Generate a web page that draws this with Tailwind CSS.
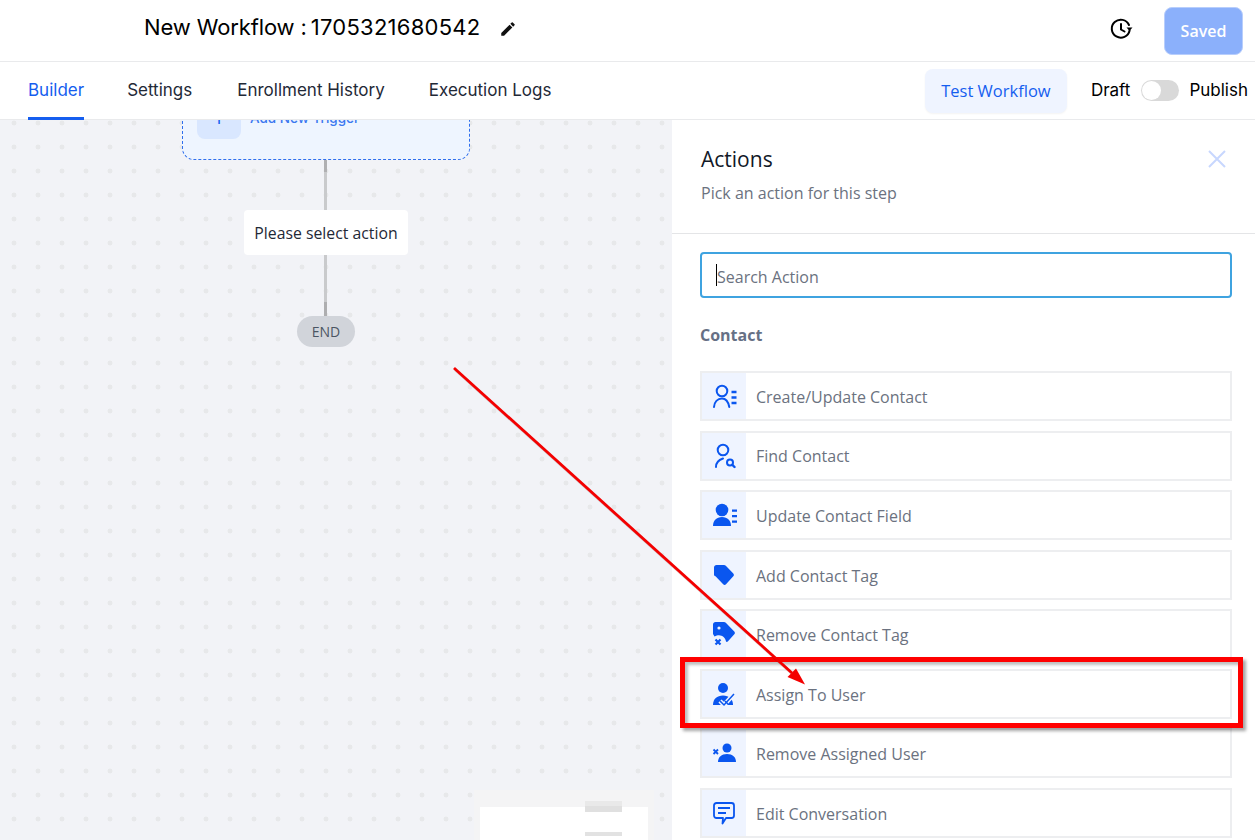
<!DOCTYPE html>
<html lang="en">
<head>
    <meta charset="UTF-8">
    <title>New Workflow</title>
    <script src="https://cdn.jsdelivr.net/npm/@tailwindcss/browser@4"></script>
</head>
<body class="bg-white w-[1255px] h-[840px] overflow-hidden relative font-['Inter',sans-serif]">

    <!-- Top bar -->
    <header class="h-[62px] border-b border-[#e9eaec] flex items-center pl-[144px] pr-[12px]">
        <h1 class="text-[22px] text-black leading-none -mt-[7px] flex"><span class="tracking-[-0.12px]">New Workflow :</span><span class="ml-[4px] tracking-[0.25px]">1705321680542</span></h1>
        <svg class="ml-[19px] -mt-[3px]" width="18" height="18" viewBox="0 0 24 24" fill="#111"><path d="M3 17.25V21h3.75L17.81 9.94l-3.75-3.75L3 17.25zM20.71 7.04a1 1 0 0 0 0-1.41l-2.34-2.34a1 1 0 0 0-1.41 0l-1.83 1.83 3.75 3.75 1.83-1.83z"/></svg>
        <svg class="ml-auto -mt-[4px]" width="24" height="24" viewBox="0 0 24 24" fill="none" stroke="#000" stroke-width="2"><path d="M20.6 13.500A9 9 0 1 1 20 8" stroke-linecap="round"/><path d="M12 7V12.500l3.500 2" stroke-linecap="round"/><path d="M17.500 10.500h6l-3 3.500z" fill="#000" stroke="none"/></svg>
        <button class="ml-[31px] w-[79px] h-[48px] rounded-lg bg-[#8bb0fb] border border-[#b8cefc] text-white font-semibold text-[16px] pt-[1px] font-['Open_Sans',sans-serif]">Saved</button>
    </header>

    <!-- Tabs -->
    <nav class="h-[58px] border-b border-[#e9eaec] flex items-stretch pl-[28px] pr-[7px] text-[17px] text-[#1f2937]">
        <a class="flex items-center border-b-[3px] border-[#155eef] text-[#155eef] pt-[2px] -mb-px">Builder</a>
        <a class="flex items-center ml-[43px]">Settings</a>
        <a class="flex items-center ml-[45px]">Enrollment History</a>
        <a class="flex items-center ml-[44px]">Execution Logs</a>
        <div class="ml-auto flex items-center text-black">
            <button class="w-[142px] h-[44px] rounded-lg bg-[#eff4ff] text-[#155eef] font-medium text-[16.500px] pt-[1px] font-['Open_Sans',sans-serif] shadow-[0_1px_2px_rgba(0,0,0,0.05)]">Test Workflow</button>
            <span class="ml-[24px]">Draft</span>
            <span class="ml-[11px] w-[38px] h-[21px] rounded-full bg-[#d9d9d9] relative"><span class="absolute left-[1px] top-[1px] w-[19px] h-[19px] rounded-full bg-white"></span></span>
            <span class="ml-[10px]">Publish</span>
        </div>
    </nav>

    <main class="flex h-[720px]">
        <!-- Canvas -->
        <section class="relative w-[672px] overflow-hidden bg-[#f2f3f7] bg-[radial-gradient(circle,#e7e8ea_2.2px,transparent_2.700px)] bg-[size:24px_24px] bg-[position:2px_-9px] font-['Open_Sans',sans-serif]">
            <div class="absolute left-[182px] -top-[40px] w-[288px] h-[80px] rounded-xl border border-dashed border-[#2f6fed] bg-[#eef5ff]">
                <div class="absolute left-[14px] top-[14px] w-[44px] h-[44px] rounded-lg bg-[#d9e7ff] text-[#155eef] text-[22px] leading-[44px] text-center">+</div>
                <span class="absolute left-[67px] top-[27px] text-[13.500px] leading-5 text-[#3b78f0] font-medium font-['Inter',sans-serif]">Add New Trigger</span>
            </div>
            <div class="absolute left-[324px] top-[40px] w-[3px] h-[50px] bg-[linear-gradient(#b0b0b2_12px,#c9cacc_12px)]"></div>
            <div class="absolute left-[244px] top-[90px] w-[164px] h-[45px] rounded bg-white flex items-center justify-center pt-[2px] text-[15.800px] text-[#1f2937]">Please select action</div>
            <div class="absolute left-[324px] top-[135px] w-[3px] h-[61px] bg-[linear-gradient(#c9cacc_47px,#aeaeb0_47px)]"></div>
            <div class="absolute left-[297px] top-[196px] w-[58px] h-[31px] rounded-full bg-[#d1d4da] flex items-center justify-center text-[14px] text-[#4b5563]">END</div>

            <!-- Minimap -->
            <div class="absolute left-[474px] top-[670px] w-[180px] h-[50px] bg-[#f4f4f5] pl-[6px] pr-[6px] pt-[17px]">
                <div class="h-full bg-white"></div>
                <div class="absolute left-[111px] top-[11px] w-[37px] h-[11px] bg-[linear-gradient(#e9e9e9_5px,#e0e0e0_5px)]"></div>
                <div class="absolute left-[111px] top-[42px] w-[37px] h-[4px] bg-[#e2e2e2]"></div>
            </div>
        </section>

        <!-- Actions panel -->
        <aside class="flex-1 font-['Open_Sans',sans-serif]">
            <div class="h-[114px] border-b border-[#e4e5e7] pl-[29px] pr-[28px] pt-[25px] relative">
                <h2 class="text-[21px] leading-7 font-medium text-[#111827] font-['Open_Sans',sans-serif]">Actions</h2>
                <p class="mt-[8px] text-[16px] leading-6 text-[#6b7280]">Pick an action for this step</p>
                <svg class="absolute right-[28px] top-[29px]" width="20" height="20" viewBox="0 0 20 20" fill="none" stroke="#c7d7fe" stroke-width="2"><path d="M2 2l16 16M18 2L2 18"/></svg>
            </div>
            <div class="pl-[28px] pr-[23px] pt-[18px]">
                <div class="h-[46px] rounded border-2 border-[#3fa3e0] flex items-center pl-[14px] pt-[4px] text-[16px] text-[#6b7280]"><span class="w-px h-[22px] bg-black -mt-[4px]"></span>Search Action</div>
                <h3 class="mt-[25px] text-[16px] leading-6 font-bold text-[#667085]">Contact</h3>
                <div class="mt-[24px] flex flex-col gap-[9.5px] text-[16px] text-[#6b7280]">

                    <div class="h-[50px] flex items-center border-2 border-[#edeef0]">
                        <span class="w-[44px] h-full bg-[#eff4ff] flex items-center justify-center shrink-0">
                            <svg width="26" height="26" viewBox="0 0 26 26" fill="none" stroke="#0a56ef" stroke-width="2"><circle cx="11" cy="8" r="5.300"/><path d="M3 24c.4-5 3.500-8.500 8-8.500 3.500 0 6 2 7.300 8.500" stroke-linecap="round"/><path d="M20.500 9h5M20.500 14.500h5M20.500 20h5" stroke-width="2.400"/></svg>
                        </span>
                        <span class="ml-[10px] pt-[1px]">Create/Update Contact</span>
                    </div>

                    <div class="h-[50px] flex items-center border-2 border-[#edeef0]">
                        <span class="w-[44px] h-full bg-[#eff4ff] flex items-center justify-center shrink-0">
                            <svg width="24" height="26" viewBox="0 0 24 26" fill="none" stroke="#0a56ef" stroke-width="2"><circle cx="11" cy="7" r="5.300"/><path d="M4 24c0-4 2.500-7 7-8.500" stroke-linecap="round"/><circle cx="18" cy="19.500" r="3"/><path d="M20.500 22l2 2" stroke-linecap="round" stroke-width="2.400"/></svg>
                        </span>
                        <span class="ml-[10px]">Find Contact</span>
                    </div>

                    <div class="h-[50px] flex items-center border-2 border-[#edeef0]">
                        <span class="w-[44px] h-full bg-[#eff4ff] flex items-center justify-center shrink-0">
                            <svg width="26" height="26" viewBox="0 0 26 26" fill="#0a56ef"><circle cx="11" cy="8" r="6.300"/><path d="M2 24c0-5.500 3.500-9 9-9s9 3.500 9 9z"/><path d="M21 7.500h5v2.200h-5zM21 13h5v2.200h-5zM21 18.500h5v2.200h-5z"/></svg>
                        </span>
                        <span class="ml-[10px] pt-[1px]">Update Contact Field</span>
                    </div>

                    <div class="h-[50px] flex items-center border-2 border-[#edeef0]">
                        <span class="w-[44px] h-full bg-[#eff4ff] flex items-center justify-center shrink-0">
                            <svg width="22" height="22" viewBox="0 0 22 22" fill="#0a56ef"><path d="M3.500 1H11c.7 0 1.300.3 1.800.8l7.500 7.700c.8.800.8 2 0 2.800l-7.300 8c-.8.8-2 .8-2.800 0l-7.700-8C1.300 12 1 11.300 1 10.500V3.500C1 2.100 2.100 1 3.500 1z"/></svg>
                        </span>
                        <span class="ml-[10px] pt-[2px]">Add Contact Tag</span>
                    </div>

                    <div class="h-[50px] flex items-center border-2 border-[#edeef0]">
                        <span class="w-[44px] h-full bg-[#eff4ff] flex items-center justify-center shrink-0">
                            <svg width="24" height="26" viewBox="0 0 24 26" fill="#0a56ef"><path d="M3.500 1H12c.7 0 1.300.3 1.800.8l8.500 8.700c.8.800.8 2 0 2.800l-6.300 7c-.8.800-1.500.8-2 .2-.5-3.500-3.500-6.300-7-6.300-1.500 0-3 .3-4.500 1.300L1 13V3.500C1 2.100 2.100 1 3.500 1z"/><circle cx="7" cy="7" r="1.600" fill="#eff4ff"/><path d="M3.500 18.500l5 5M8.500 18.500l-5 5" stroke="#0a56ef" stroke-width="2.200" fill="none"/></svg>
                        </span>
                        <span class="ml-[10px] pt-[1px]">Remove Contact Tag</span>
                    </div>

                    <div class="h-[50px] flex items-center border-2 border-[#edeef0]">
                        <span class="w-[44px] h-full bg-[#eff4ff] flex items-center justify-center shrink-0">
                            <svg width="24" height="26" viewBox="0 0 24 26" fill="#0a56ef"><circle cx="11" cy="7" r="5"/><path d="M1 24c0-6 4-9.500 10-9.500s10 3.500 10 9.500z"/><path d="M8 20l4 4 10-11" stroke="#eff4ff" stroke-width="4.500" fill="none"/><path d="M8 20l4 4 10-11" stroke="#0a56ef" stroke-width="1.500" fill="none"/><path d="M13 20l3 3" stroke="#0a56ef" stroke-width="1.500" fill="none"/></svg>
                        </span>
                        <span class="ml-[10px] pt-[2px]">Assign To User</span>
                    </div>

                    <div class="h-[50px] flex items-center border-2 border-[#edeef0]">
                        <span class="w-[44px] h-full bg-[#eff4ff] flex items-center justify-center shrink-0">
                            <svg width="24" height="20" viewBox="0 0 24 20" fill="#0a56ef"><circle cx="15" cy="5" r="4.500"/><path d="M6 19c0-5 3.500-8 9-8s9 3 9 8z"/><path d="M1.500 6.500l4.500 4.500M6 6.500l-4.500 4.500" stroke="#0a56ef" stroke-width="1.800" fill="none"/></svg>
                        </span>
                        <span class="ml-[10px] pt-[1px]">Remove Assigned User</span>
                    </div>

                    <div class="h-[50px] flex items-center border-2 border-[#edeef0]">
                        <span class="w-[44px] h-full bg-[#eff4ff] flex items-center justify-center shrink-0">
                            <svg width="24" height="24" viewBox="0 0 24 24" fill="none" stroke="#0a56ef" stroke-width="1.800"><path d="M4.500 2h15C21 2 22 3 22 4.500v10c0 1.500-1 2.500-2.500 2.500H14l-3.500 5.500 .5-5.500H4.500C3 17 2 16 2 14.500v-10C2 3 3 2 4.500 2z" stroke-linejoin="round"/><path d="M6 7h12M6 12h8"/></svg>
                        </span>
                        <span class="ml-[10px] pt-[2px]">Edit Conversation</span>
                    </div>
                </div>
            </div>
        </aside>
    </main>

    <!-- Annotations drawn over the screenshot -->
    <div class="absolute left-[680px] top-[657px] w-[563px] h-[71px] border-[5px] border-[#ff0000] shadow-[3px_3px_3px_rgba(0,0,0,0.35),inset_3px_3px_3px_rgba(0,0,0,0.25)]"></div>
    <svg class="absolute inset-0 pointer-events-none" width="1255" height="840" viewBox="0 0 1255 840">
        <path d="M455 369.500L793 674.500" stroke="#000" stroke-opacity="0.15" stroke-width="3" fill="none"/>
        <path d="M454 368L792 673" stroke="#f40000" stroke-width="2.800" fill="none"/>
        <path d="M805 684.500L787.500 677 796 668.500z" fill="#f40000"/>
    </svg>
</body>
</html>
